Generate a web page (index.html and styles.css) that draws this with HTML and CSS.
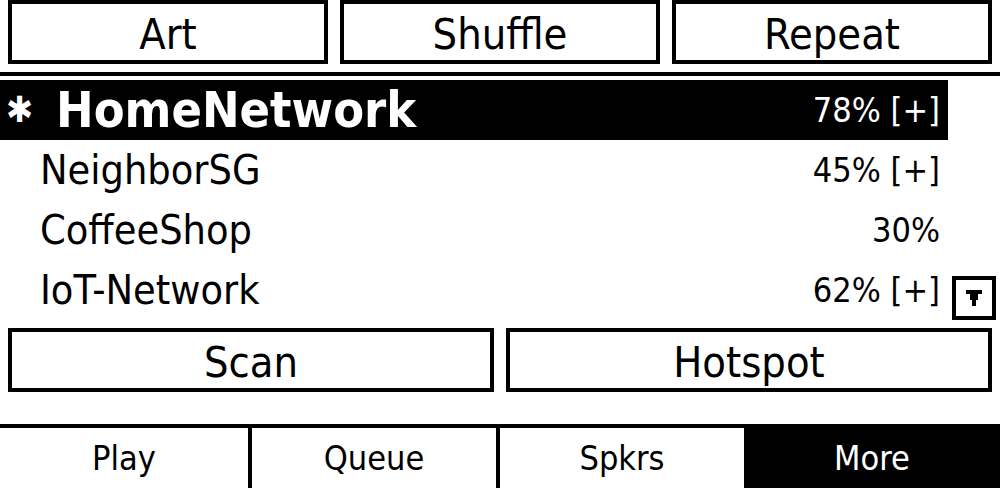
FILE: index.html
```html
<!DOCTYPE html>
<html lang="en">
<head>
<meta charset="utf-8">
<title>WiFi</title>
<link rel="stylesheet" href="styles.css">
</head>
<body>
<div class="screen">
  <div class="btn-row top">
    <div class="btn">Art</div>
    <div class="btn">Shuffle</div>
    <div class="btn">Repeat</div>
  </div>
  <div class="sep"></div>
  <div class="list">
    <div class="rows">
      <div class="row selected">
        <span class="mark">✱</span>
        <span class="name">HomeNetwork</span>
        <span class="pct">78% [+]</span>
      </div>
      <div class="row">
        <span class="name">NeighborSG</span>
        <span class="pct">45% [+]</span>
      </div>
      <div class="row">
        <span class="name">CoffeeShop</span>
        <span class="pct">30%</span>
      </div>
      <div class="row">
        <span class="name">IoT-Network</span>
        <span class="pct">62% [+]</span>
      </div>
    </div>
    <div class="scroll">
      <div class="arrow">
        <svg width="16" height="16" viewBox="0 0 16 16"><path d="M0 0 H16 V4 H12 V10 H10 V16 H6 V10 H4 V4 H0 Z" fill="#000"/></svg>
      </div>
    </div>
  </div>
  <div class="btn-row bottom">
    <div class="btn">Scan</div>
    <div class="btn">Hotspot</div>
  </div>
  <div class="tabs">
    <div class="tab t1">Play</div>
    <div class="tab t2">Queue</div>
    <div class="tab t3">Spkrs</div>
    <div class="tab t4 active">More</div>
  </div>
</div>
</body>
</html>
```

FILE: styles.css
```css
* { box-sizing: border-box; }
html, body {
  margin: 0;
  padding: 0;
  background: #fff;
}
body {
  width: 1000px;
  height: 488px;
  overflow: hidden;
  color: #000;
  font-family: "DejaVu Sans Condensed", "DejaVu Sans", sans-serif;
  font-stretch: condensed;
}
.screen {
  display: flex;
  flex-direction: column;
  width: 1000px;
  height: 488px;
}
.btn-row {
  display: flex;
  gap: 12px;
  padding: 0 8px;
  height: 64px;
  flex: none;
}
.btn {
  flex: 1;
  border: 4px solid #000;
  display: flex;
  align-items: center;
  justify-content: center;
  font-size: 43px;
  line-height: 1;
  padding-top: 4px;
}
.btn-row.bottom { margin-top: 8px; }
.sep {
  height: 4px;
  background: #000;
  margin: 8px 0 4px;
  flex: none;
}
.list {
  display: flex;
  height: 240px;
  flex: none;
}
.rows {
  width: 948px;
  display: flex;
  flex-direction: column;
}
.row {
  height: 60px;
  display: flex;
  align-items: center;
  padding: 0 8px 0 40px;
  line-height: 1;
}
.row .name {
  font-size: 41px;
  flex: 1;
}
.row .pct {
  font-size: 34px;
}
.row.selected {
  background: #000;
  color: #fff;
  padding-left: 6px;
}
.row.selected .mark {
  font-size: 36px;
  width: 50px;
  font-stretch: normal;
}
.row.selected .name {
  font-size: 50px;
  font-weight: bold;
}
.scroll {
  flex: 1;
  display: flex;
  align-items: flex-end;
  padding-left: 4px;
}
.arrow {
  width: 44px;
  height: 44px;
  border: 4px solid #000;
  display: flex;
  align-items: center;
  justify-content: center;
}
.arrow svg { display: block; }
.tabs {
  margin-top: 32px;
  height: 64px;
  border-top: 4px solid #000;
  display: flex;
  flex: none;
}
.tab {
  width: 248px;
  display: flex;
  align-items: center;
  justify-content: center;
  font-size: 34px;
  line-height: 1;
}
.tab.t2, .tab.t3 { border-left: 4px solid #000; }
.tab.t4 { flex: 1; }
.tab.active {
  background: #000;
  color: #fff;
}
```
